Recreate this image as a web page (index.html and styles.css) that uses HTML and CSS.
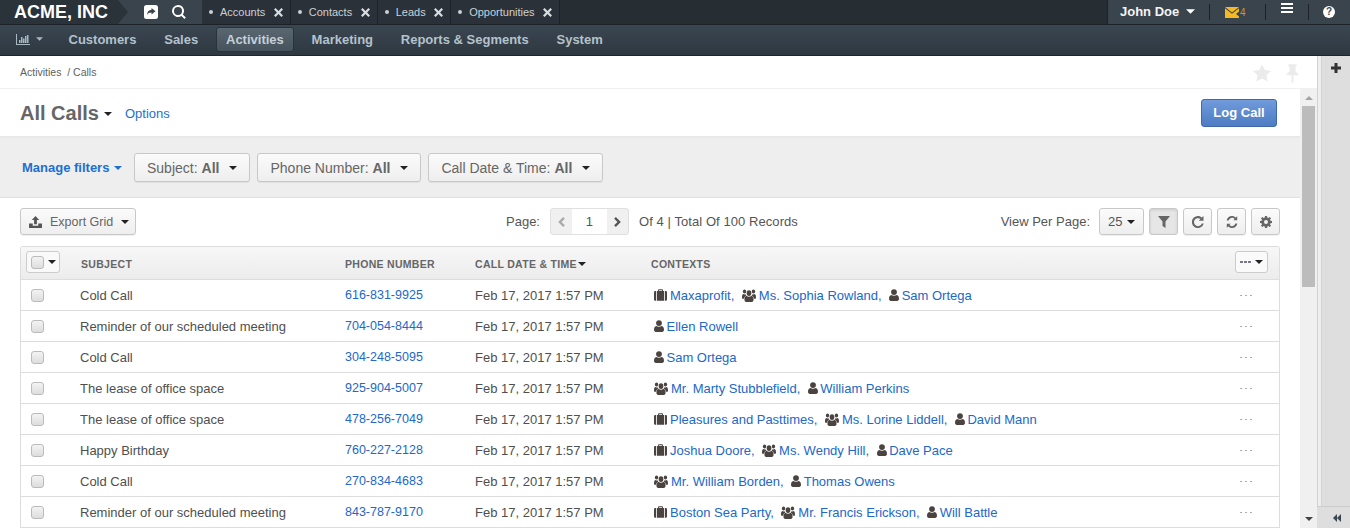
FILE: index.html
```html
<!DOCTYPE html>
<html lang="en">
<head>
<meta charset="utf-8">
<title>All Calls</title>
<link rel="stylesheet" href="styles.css">
</head>
<body>
<svg class="sprite" width="0" height="0">
  <symbol id="i-case" viewBox="0 0 16 14"><path d="M5 2V1a1 1 0 0 1 1-1h4a1 1 0 0 1 1 1v1h3.500A1.500 1.500 0 0 1 16 3.500v9a1.500 1.500 0 0 1-1.500 1.500h-13A1.500 1.500 0 0 1 0 12.500v-9A1.500 1.500 0 0 1 1.500 2zm1.200 0h3.600V1.200H6.200zM2.500 2v12h1V2zm10 0v12h1V2z" fill-rule="evenodd"/></symbol>
  <symbol id="i-user" viewBox="0 0 11 13"><circle cx="5.500" cy="3.300" r="3.200"/><path d="M2.500 6.500c1.700 1.200 4.300 1.200 6 0C10.200 6.800 11 8.600 11 11c0 1.300-.9 2-2 2H2c-1.100 0-2-.7-2-2 0-2.400.8-4.200 2.500-4.500z"/></symbol>
  <symbol id="i-group" viewBox="0 0 16 12" preserveAspectRatio="none"><circle cx="8" cy="3.800" r="2.700"/><circle cx="2.900" cy="2.300" r="1.900"/><circle cx="13.100" cy="2.300" r="1.900"/><path d="M5.200 6.300c1.600 1.100 4 1.100 5.600 0 1.600.2 2.400 1.700 2.400 3.700 0 1.200-.8 2-1.900 2H4.700c-1.100 0-1.900-.8-1.900-2 0-2 .8-3.500 2.400-3.700z"/><path d="M1.500 4.600c.8.500 2 .5 2.700.2.100.500.400 1 .8 1.300-1.300.4-2.200 1.300-2.500 3H1c-.6 0-1-.4-1-1 0-1.700.3-3.200 1.500-3.500zM14.500 4.600c-.8.500-2 .5-2.700.2-.1.500-.4 1-.8 1.300 1.300.4 2.200 1.300 2.500 3H15c.6 0 1-.4 1-1 0-1.700-.3-3.200-1.500-3.500z"/></symbol>
  <symbol id="i-caret" viewBox="0 0 8 4"><path d="M0 0h8L4 4z"/></symbol>
  <symbol id="i-times" viewBox="0 0 9 9"><path d="M1.600 0L4.500 2.900 7.400 0 9 1.600 6.100 4.500 9 7.400 7.400 9 4.500 6.100 1.600 9 0 7.400 2.900 4.500 0 1.600z"/></symbol>
</svg>

<header class="topbar">
  <div class="brand"><span class="brand-name">ACME, INC</span></div>
  <div class="quick">
    <svg class="quick-icon" viewBox="0 0 14 14"><path d="M2.500 0h9A2.500 2.500 0 0 1 14 2.500v9a2.500 2.500 0 0 1-2.500 2.500h-9A2.500 2.500 0 0 1 0 11.500v-9A2.500 2.500 0 0 1 2.500 0zM7.500 3v1.800C5 5 3.300 6.500 3 10c1-1.600 2.500-2.400 4.500-2.400V9.500L11.500 6.200z" fill-rule="evenodd"/></svg>
    <svg class="quick-icon" viewBox="0 0 14 14"><path d="M6 0a6 6 0 0 1 4.800 9.600l3 3-1.300 1.300-3-3A6 6 0 1 1 6 0zm0 2a4 4 0 1 0 0 8 4 4 0 0 0 0-8z" fill-rule="evenodd"/></svg>
  </div>
  <nav class="tabs">
    <a class="tab"><i class="dot"></i>Accounts<svg class="close"><use href="#i-times"/></svg></a>
    <a class="tab"><i class="dot"></i>Contacts<svg class="close"><use href="#i-times"/></svg></a>
    <a class="tab"><i class="dot"></i>Leads<svg class="close"><use href="#i-times"/></svg></a>
    <a class="tab"><i class="dot"></i>Opportunities<svg class="close"><use href="#i-times"/></svg></a>
  </nav>
  <div class="userbar">
    <a class="user">John Doe<svg class="caret caret-white"><use href="#i-caret"/></svg></a>
    <a class="ub-item ub-mail">
      <svg class="mail" viewBox="0 0 14 11"><path d="M0 0h14L7 5.500z"/><path d="M0 1.200l7 5.500 7-5.500v3.300L11 7l3 2.500V11H0z"/></svg><span class="mail-count">4</span>
    </a>
    <a class="ub-item ub-menu"><span class="burger"></span></a>
    <a class="ub-item ub-help"><span class="help">?</span></a>
  </div>
</header>

<nav class="menubar">
  <a class="menu-chart">
    <svg class="chart" viewBox="0 0 14 11"><path d="M0 0h1v10h13v1H0zM3 6h1.500v3H3zM5 3h1.500v6H5zM7 4.500h1.500V9H7zM9 2h1.500v7H9zM11 1h1.500v8H11z"/></svg>
    <svg class="caret caret-muted"><use href="#i-caret"/></svg>
  </a>
  <a class="menu-link">Customers</a>
  <a class="menu-link">Sales</a>
  <a class="menu-link is-active">Activities</a>
  <a class="menu-link">Marketing</a>
  <a class="menu-link">Reports &amp; Segments</a>
  <a class="menu-link">System</a>
</nav>

<div class="workspace">
  <main class="content">
    <div class="crumbs">
      <span>Activities&nbsp; / Calls</span>
      <div class="crumb-icons">
        <svg class="star" viewBox="0 0 20 19"><path d="M10 0l3 6.300 7 .9-5.100 4.800 1.300 6.900L10 15.600l-6.200 3.300L5.100 12 0 7.200l7-.9z"/></svg>
        <svg class="pin" viewBox="0 0 14 20"><path d="M2.500 0h9v1.500L10.300 3v5c2 .8 3.200 2.300 3.200 4H8v8H6v-8H.5c0-1.700 1.200-3.200 3.200-4V3L2.500 1.500z"/></svg>
      </div>
    </div>
    <div class="scroller">
      <div class="pane">
        <div class="titlebar">
          <h1 class="title">All Calls</h1>
          <svg class="caret caret-dark title-caret"><use href="#i-caret"/></svg>
          <a class="options">Options</a>
          <button class="btn-primary">Log Call</button>
        </div>
        <div class="filters">
          <a class="manage">Manage filters<svg class="caret caret-blue"><use href="#i-caret"/></svg></a>
          <button class="btn filter">Subject: <b>All</b><svg class="caret caret-dark"><use href="#i-caret"/></svg></button>
          <button class="btn filter">Phone Number: <b>All</b><svg class="caret caret-dark"><use href="#i-caret"/></svg></button>
          <button class="btn filter">Call Date &amp; Time: <b>All</b><svg class="caret caret-dark"><use href="#i-caret"/></svg></button>
        </div>
        <div class="toolbar">
          <div class="tb-left">
            <button class="btn export">
              <svg class="upload" viewBox="0 0 14 13"><path d="M7 0l4 4.200H8.500V9h-3V4.200H3zM0 8h4v2.500h6V8h4v5H0z"/></svg>Export Grid<svg class="caret caret-dark"><use href="#i-caret"/></svg>
            </button>
          </div>
          <div class="pager">
            <span class="pager-label">Page:</span>
            <div class="stepper">
              <span class="step step-off"><svg viewBox="0 0 8 12"><path d="M6 0l2 2-4 4 4 4-2 2-6-6z"/></svg></span>
              <span class="step-num">1</span>
              <span class="step"><svg viewBox="0 0 8 12"><path d="M2 0L0 2l4 4-4 4 2 2 6-6z"/></svg></span>
            </div>
            <span class="pager-total">Of 4 | Total Of 100 Records</span>
          </div>
          <div class="tb-right">
            <span class="pager-label">View Per Page:</span>
            <button class="btn perpage">25<svg class="caret caret-dark"><use href="#i-caret"/></svg></button>
            <button class="btn tool is-on"><svg viewBox="0 0 12 12"><path d="M0 0h12L7.500 5.500V12l-3-2V5.500z"/></svg></button>
            <button class="btn tool"><svg viewBox="0 0 12 12"><path d="M6 0c1.500 0 2.900.6 3.900 1.600L11.500 0v4.800H6.700l1.800-1.800A4 4 0 1 0 9.800 7.500h1.900A6 6 0 1 1 6 0z"/></svg></button>
            <button class="btn tool"><svg viewBox="0 0 12 12"><path d="M6 0c1.500 0 2.800.6 3.800 1.500L11.200.3v3.900H7.300l1.300-1.300A3.600 3.600 0 0 0 2.600 4.500H.7A5.500 5.500 0 0 1 6 0zM6 12c-1.500 0-2.800-.6-3.800-1.500L.8 11.700V7.800h3.900L3.400 9.100a3.600 3.600 0 0 0 6-1.600h1.900A5.500 5.500 0 0 1 6 12z"/></svg></button>
            <button class="btn tool"><svg viewBox="0 0 12 12"><path d="M5 0h2l.3 1.600 1 .4L9.700 1l1.300 1.300-1 1.400.4 1 1.600.3v2l-1.600.3-.4 1 1 1.400L9.700 11l-1.400-1-1 .4L7 12H5l-.3-1.600-1-.4-1.400 1L1 9.700l1-1.400-.4-1L0 7V5l1.600-.3.4-1-1-1.400L2.300 1l1.400 1 1-.4zM6 4a2 2 0 1 0 0 4 2 2 0 0 0 0-4z" fill-rule="evenodd"/></svg></button>
          </div>
        </div>
        <div class="grid">
          <div class="row row-head">
            <div class="c-check"><span class="check-btn"><i class="check"></i><svg class="caret caret-dark"><use href="#i-caret"/></svg></span></div>
            <div class="c-subject">SUBJECT</div>
            <div class="c-phone">PHONE NUMBER</div>
            <div class="c-date">CALL DATE &amp; TIME<svg class="caret caret-dark sort"><use href="#i-caret"/></svg></div>
            <div class="c-ctx">CONTEXTS</div>
            <div class="c-act"><span class="more-btn"><span class="dots"></span><svg class="caret caret-dark"><use href="#i-caret"/></svg></span></div>
          </div>

          <div class="row">
            <div class="c-check"><i class="check"></i></div><div class="c-subject">Cold Call</div><div class="c-phone"><a>616-831-9925</a></div><div class="c-date">Feb 17, 2017 1:57 PM</div>
            <div class="c-ctx"><span class="ctx"><svg class="ic-case"><use href="#i-case"/></svg><a>Maxaprofit,</a></span><span class="ctx"><svg class="ic-group"><use href="#i-group"/></svg><a>Ms. Sophia Rowland,</a></span><span class="ctx"><svg class="ic-user"><use href="#i-user"/></svg><a>Sam Ortega</a></span></div>
            <div class="c-act"><span class="row-more"></span></div>
          </div>
          <div class="row">
            <div class="c-check"><i class="check"></i></div><div class="c-subject">Reminder of our scheduled meeting</div><div class="c-phone"><a>704-054-8444</a></div><div class="c-date">Feb 17, 2017 1:57 PM</div>
            <div class="c-ctx"><span class="ctx"><svg class="ic-user"><use href="#i-user"/></svg><a>Ellen Rowell</a></span></div>
            <div class="c-act"><span class="row-more"></span></div>
          </div>
          <div class="row">
            <div class="c-check"><i class="check"></i></div><div class="c-subject">Cold Call</div><div class="c-phone"><a>304-248-5095</a></div><div class="c-date">Feb 17, 2017 1:57 PM</div>
            <div class="c-ctx"><span class="ctx"><svg class="ic-user"><use href="#i-user"/></svg><a>Sam Ortega</a></span></div>
            <div class="c-act"><span class="row-more"></span></div>
          </div>
          <div class="row">
            <div class="c-check"><i class="check"></i></div><div class="c-subject">The lease of office space</div><div class="c-phone"><a>925-904-5007</a></div><div class="c-date">Feb 17, 2017 1:57 PM</div>
            <div class="c-ctx"><span class="ctx"><svg class="ic-group"><use href="#i-group"/></svg><a>Mr. Marty Stubblefield,</a></span><span class="ctx"><svg class="ic-user"><use href="#i-user"/></svg><a>William Perkins</a></span></div>
            <div class="c-act"><span class="row-more"></span></div>
          </div>
          <div class="row">
            <div class="c-check"><i class="check"></i></div><div class="c-subject">The lease of office space</div><div class="c-phone"><a>478-256-7049</a></div><div class="c-date">Feb 17, 2017 1:57 PM</div>
            <div class="c-ctx"><span class="ctx"><svg class="ic-case"><use href="#i-case"/></svg><a>Pleasures and Pasttimes,</a></span><span class="ctx"><svg class="ic-group"><use href="#i-group"/></svg><a>Ms. Lorine Liddell,</a></span><span class="ctx"><svg class="ic-user"><use href="#i-user"/></svg><a>David Mann</a></span></div>
            <div class="c-act"><span class="row-more"></span></div>
          </div>
          <div class="row">
            <div class="c-check"><i class="check"></i></div><div class="c-subject">Happy Birthday</div><div class="c-phone"><a>760-227-2128</a></div><div class="c-date">Feb 17, 2017 1:57 PM</div>
            <div class="c-ctx"><span class="ctx"><svg class="ic-case"><use href="#i-case"/></svg><a>Joshua Doore,</a></span><span class="ctx"><svg class="ic-group"><use href="#i-group"/></svg><a>Ms. Wendy Hill,</a></span><span class="ctx"><svg class="ic-user"><use href="#i-user"/></svg><a>Dave Pace</a></span></div>
            <div class="c-act"><span class="row-more"></span></div>
          </div>
          <div class="row">
            <div class="c-check"><i class="check"></i></div><div class="c-subject">Cold Call</div><div class="c-phone"><a>270-834-4683</a></div><div class="c-date">Feb 17, 2017 1:57 PM</div>
            <div class="c-ctx"><span class="ctx"><svg class="ic-group"><use href="#i-group"/></svg><a>Mr. William Borden,</a></span><span class="ctx"><svg class="ic-user"><use href="#i-user"/></svg><a>Thomas Owens</a></span></div>
            <div class="c-act"><span class="row-more"></span></div>
          </div>
          <div class="row">
            <div class="c-check"><i class="check"></i></div><div class="c-subject">Reminder of our scheduled meeting</div><div class="c-phone"><a>843-787-9170</a></div><div class="c-date">Feb 17, 2017 1:57 PM</div>
            <div class="c-ctx"><span class="ctx"><svg class="ic-case"><use href="#i-case"/></svg><a>Boston Sea Party,</a></span><span class="ctx"><svg class="ic-group"><use href="#i-group"/></svg><a>Mr. Francis Erickson,</a></span><span class="ctx"><svg class="ic-user"><use href="#i-user"/></svg><a>Will Battle</a></span></div>
            <div class="c-act"><span class="row-more"></span></div>
          </div>
        </div>
      </div>
      <div class="scrollbar">
        <div class="sb-up"></div>
        <div class="sb-thumb"></div>
        <div class="sb-down"></div>
      </div>
    </div>
  </main>
  <aside class="side">
    <div class="side-main"><svg class="plus" viewBox="0 0 10 10"><path d="M3.500 0h3v3.500H10v3H6.500V10h-3V6.500H0v-3h3.500z"/></svg></div>
    <div class="side-bottom"><svg class="collapse" viewBox="0 0 8 8"><path d="M4 0v8L0 4zM8 0v8L4 4z"/></svg></div>
  </aside>
</div>
</body>
</html>
```
FILE: styles.css
```css
* { box-sizing: border-box; }
html, body { margin: 0; height: 528px; overflow: hidden; background: #fff; }
body { font-family: "Liberation Sans", Arial, sans-serif; font-size: 13px; color: #555; display: flex; flex-direction: column; }
a { color: inherit; text-decoration: none; }
button { font-family: inherit; margin: 0; cursor: default; }
svg { fill: currentColor; display: block; }
.sprite { position: absolute; }

.caret { width: 8px; height: 4px; flex: none; }
.caret-white { color: #fff; width: 9px; height: 5px; }
.caret-muted { color: #a9b8c3; width: 7px; }
.caret-dark { color: #222; }
.caret-blue { color: #1d6fd0; }

/* Top bar */
.topbar { height: 25px; flex: none; display: flex; background: #262d33; border-bottom: 1px solid #1c2227; color: #fff; }
.brand { width: 128px; flex: none; display: flex; background: #39444d; }
.brand-name { width: 118px; padding-left: 14px; background: #2a323a; font-size: 18px; font-weight: bold; line-height: 24px; white-space: nowrap; }
.brand::after { content: ""; width: 0; height: 0; border-left: 10px solid #2a323a; border-top: 12px solid transparent; border-bottom: 12px solid transparent; }
.quick { width: 74px; flex: none; display: flex; gap: 14px; padding: 5px 0 0 16px; background: #39444d; }
.quick-icon { width: 14px; height: 14px; color: #fff; }
.tabs { display: flex; flex: none; }
.tab { display: flex; align-items: center; height: 24px; padding: 0 7px 0 7px; font-size: 11px; color: #c9d1d7; border-right: 1px solid #1c2227; background: #2a3138; }
.dot { width: 4px; height: 4px; border-radius: 50%; background: #c9d1d7; margin-right: 7px; }
.close { width: 9px; height: 9px; margin-left: 8.500px; color: #d7dde2; flex: none; }
.userbar { margin-left: auto; width: 243px; display: flex; align-items: center; background: #39444d; border-left: 1px solid #1c2227; }
.user { display: flex; align-items: center; gap: 7px; padding-left: 12px; width: 101px; margin-top: -2px; font-size: 13px; font-weight: bold; color: #f3f5f6; }
.ub-item { height: 16px; border-left: 1px solid #1c2227; display: flex; align-items: center; }
.ub-mail { width: 56px; padding-left: 15px; }
.mail { width: 14px; height: 11px; color: #f5b921; flex: none; }
.mail-count { font-size: 10px; color: #c79a2b; margin-left: 1px; }
.ub-menu { width: 43px; padding-left: 15px; }
.burger { width: 12px; height: 10px; margin-top: -8px; border-top: 2px solid #fff; border-bottom: 2px solid #fff; display: flex; align-items: center; }
.burger::after { content: ""; width: 100%; height: 2px; background: #fff; }
.ub-help { flex: 1; padding-left: 14px; }
.help { width: 12px; height: 12px; border-radius: 50%; background: #fff; color: #39444d; font-size: 10px; font-weight: bold; line-height: 12px; text-align: center; }

/* Menu */
.menubar { height: 31px; flex: none; display: flex; align-items: center; padding: 0 0 2px 16px; background: linear-gradient(#3a4650, #2e3841); border-bottom: 1px solid #1f262b; }
.menu-chart { display: flex; align-items: center; gap: 6px; width: 42px; color: #a9b8c3; }
.chart { width: 14px; height: 11px; }
.menu-link { font-size: 13px; font-weight: bold; color: #b4c2cc; padding: 0 9.500px; height: 25px; line-height: 23px; margin-right: 6.800px; border: 1px solid transparent; border-radius: 3px; }
.is-active { background: linear-gradient(#5a6670, #46525c); border-color: #2a3339; color: #c4d0d9; }

/* Workspace */
.workspace { flex: 1; display: flex; min-height: 0; }
.content { width: 1317px; flex: none; display: flex; flex-direction: column; min-height: 0; }
.crumbs { height: 33px; flex: none; display: flex; align-items: center; padding: 0 18px 0 20px; font-size: 10.500px; color: #5f5f5f; border-bottom: 1px solid #f0f0f0; }
.crumb-icons { margin-left: auto; display: flex; gap: 15px; color: #ebebeb; margin-top: 2px; }
.star { width: 18px; height: 18px; }
.pin { width: 13px; height: 19px; }
.scroller { flex: 1; display: flex; min-height: 0; overflow: hidden; }
.pane { flex: 1; min-width: 0; }

.titlebar { height: 49px; display: flex; align-items: center; padding: 0 23px 0 20px; border-bottom: 2px solid #e8e8e8; }
.title { margin: 2px 0 0; font-size: 20px; font-weight: bold; color: #666; }
.title-caret { margin-left: 5px; margin-top: 3px; }
.options { margin-left: 13px; font-size: 13px; color: #1f6fd1; margin-top: 2px; }
.btn-primary { margin-left: auto; width: 76px; height: 28px; border: 1px solid #3f6aa6; border-radius: 3px; background: linear-gradient(#709bdc, #4d7cc3); color: #fff; font-size: 13px; font-weight: bold; padding: 0; }

.filters { height: 60px; display: flex; align-items: center; gap: 7px; padding: 0 0 0 22px; background: #eee; border-bottom: 1px solid #e0e0e0; }
.manage { display: flex; align-items: center; gap: 5px; width: 105px; font-weight: bold; font-size: 13px; color: #1d6fd0; }
.btn { display: inline-flex; align-items: center; border: 1px solid #c8c8c8; border-radius: 3px; background: linear-gradient(#fbfbfb, #eee); color: #666; font-size: 14px; padding: 0; box-shadow: 0 1px 0 rgba(0,0,0,.06); }
.filter { height: 29px; padding: 0 12px; }
.filter b { margin-left: 4px; }
.filter .caret { margin-left: 10px; }

.toolbar { height: 48px; padding: 10px 20px 0 20px; display: flex; }
.tb-left { width: 486px; flex: none; }
.export { height: 27px; padding: 0 6px 0 8px; font-size: 12.500px; }
.upload { width: 13px; height: 12px; color: #555; margin-right: 8px; }
.export .caret { margin-left: 8px; }
.pager { display: flex; align-items: center; height: 27px; font-size: 13px; color: #555; }
.pager-label { font-size: 13px; color: #555; }
.pager-total { letter-spacing: .07px; }
.stepper { display: flex; height: 27px; margin: 0 10px 0 10px; border: 1px solid #e0e0e0; border-radius: 3px; background: #f0f0f0; }
.step { width: 21px; display: flex; align-items: center; justify-content: center; color: #555; }
.step svg { width: 7px; height: 10px; }
.step-off { color: #aaa; }
.step-num { width: 35px; text-align: center; line-height: 25px; background: #fff; color: #555; }
.tb-right { margin-left: auto; display: flex; align-items: center; height: 27px; gap: 5px; }
.perpage { height: 27px; width: 45px; padding-left: 8px; gap: 5px; margin-left: 4px; font-size: 13px; color: #555; }
.tool { width: 29px; height: 27px; justify-content: center; color: #666; }
.tool svg { width: 12px; height: 12px; }
.is-on { background: #e6e6e6; box-shadow: inset 0 1px 3px rgba(0,0,0,.12); }

.grid { margin: 0 20px; border: 1px solid #ddd; border-bottom: 0; border-radius: 3px 3px 0 0; }
.row { height: 31px; display: flex; align-items: center; border-bottom: 1px solid #ddd; font-size: 13px; color: #4f4f4f; }
.row-head { height: 33px; background: linear-gradient(#f7f7f7, #ececec); font-size: 10.500px; font-weight: bold; letter-spacing: .3px; color: #666; }
.c-check { width: 59px; padding-left: 10px; flex: none; }
.c-subject { width: 265px; flex: none; }
.c-phone { width: 130px; flex: none; font-size: 12.500px; }
.c-date { width: 176px; flex: none; display: flex; align-items: center; }
.c-ctx { flex: 1; display: flex; align-items: center; }
.c-act { width: 44px; flex: none; }
.row-head .c-subject { padding: 2px 0 0 1px; }
.row-head .c-phone { font-size: 10.500px; padding-top: 2px; }
.row-head .c-date, .row-head .c-ctx { padding-top: 2px; }
.c-phone a, .ctx a { color: #2268c8; }
.check { display: block; width: 13px; height: 13px; border: 1px solid #bbb; border-radius: 3px; background: linear-gradient(#f3f3f3, #ddd); }
.check-btn { display: flex; align-items: center; gap: 4px; width: 34px; height: 22px; margin: -2px 0 0 -5px; padding-left: 4px; border: 1px solid #ccc; border-radius: 3px; background: #f9f9f9; }
.sort { margin-left: 1px; }
.more-btn { display: flex; align-items: center; justify-content: center; gap: 4px; width: 33px; height: 22px; margin-top: -2px; border: 1px solid #ccc; border-radius: 3px; background: #fafafa; }
.dots { width: 11px; height: 2px; background: repeating-linear-gradient(90deg, #778 0 3px, transparent 3px 4px); }
.ctx { display: flex; align-items: center; margin-right: 7.500px; }
.ctx:first-child { margin-left: 3px; }
.ic-case { width: 13px; height: 12px; color: #4a4340; margin-right: 3px; }
.ic-group { width: 14px; height: 13px; color: #4a4340; margin-right: 3px; }
.ic-user { width: 10px; height: 12px; color: #4a4340; margin-right: 2.500px; }
.row-more { display: block; margin-left: 5px; width: 12px; height: 1px; background: repeating-linear-gradient(90deg, #aaa 0 2px, transparent 2px 5px); }

.scrollbar { width: 17px; flex: none; padding: 0 2px; background: #f0f0f0; display: flex; flex-direction: column; align-items: center; position: relative; }
.sb-up { width: 0; height: 0; margin: 7px 0 0; border: 4px solid transparent; border-top: 0; border-bottom: 4px solid #a5a5a5; }
.sb-thumb { width: 100%; height: 181px; margin-top: 6px; background: #bcbcbc; }
.sb-down { width: 0; height: 0; position: absolute; bottom: 7px; border: 4px solid transparent; border-bottom: 0; border-top: 4px solid #444; }

.side { width: 33px; flex: none; display: flex; flex-direction: column; background: #efefef; border-left: 1px solid #d2d2d2; }
.side-main { flex: 1; margin-left: 3px; padding: 7px 0 0 9px; background: #dedede; border-left: 1px solid #d2d2d2; }
.plus { width: 10px; height: 10px; color: #333; }
.side-bottom { height: 22px; flex: none; margin-left: -1px; padding: 7px 0 0 16px; background: #dedede; border-top: 1px solid #ccc; color: #3a4650; }
.collapse { width: 8px; height: 8px; }
```
